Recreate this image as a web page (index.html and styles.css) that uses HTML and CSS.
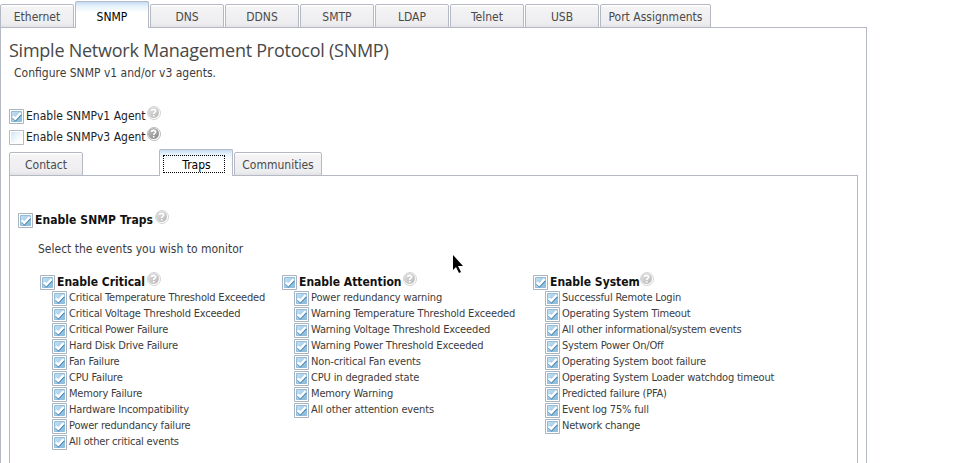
FILE: index.html
```
<!DOCTYPE html>
<html lang="en">
<head>
<meta charset="utf-8">
<title>Simple Network Management Protocol (SNMP)</title>
<link rel="stylesheet" href="styles.css">
</head>
<body>
<svg class="defs" width="0" height="0">
  <defs>
    <linearGradient id="blue" x1="0" y1="0" x2="1" y2="1"><stop offset="0" stop-color="#c6e0f2"/><stop offset=".5" stop-color="#a8d0ea"/><stop offset="1" stop-color="#7fbbe0"/></linearGradient>
    <linearGradient id="pale" x1="0" y1="0" x2="1" y2="1"><stop offset="0" stop-color="#d3e6f5"/><stop offset=".8" stop-color="#fff"/></linearGradient>
    <linearGradient id="ball" x1="0" y1="0" x2="1" y2="1"><stop offset="0" stop-color="#e0e0e0"/><stop offset="1" stop-color="#b9b9b9"/></linearGradient>
    <linearGradient id="balldark" x1="0" y1="0" x2="1" y2="1"><stop offset="0" stop-color="#c4c4c4"/><stop offset="1" stop-color="#858585"/></linearGradient>
    <symbol id="on" viewBox="0 0 15 15"><path fill="#fff" stroke="#aab4bf" d="M.5.5h14v14H.5z"/><path fill="url(#blue)" stroke="#94bcd8" d="M2.5 2.5h10v10h-10z"/><path fill="none" stroke="#4a86b0" stroke-width="2.4" d="M4 8.5l2.5 2.5 5.4-5.6"/><path fill="none" stroke="#fff" stroke-width="2.4" d="M3.7 7.3l2.6 2.5L11.7 4"/></symbol>
    <symbol id="off" viewBox="0 0 15 15"><path fill="#fff" stroke="#b3bbc5" d="M.5.5h14v14H.5z"/><path fill="url(#pale)" d="M2 2h11v11H2z"/></symbol>
    <symbol id="help" viewBox="0 0 14 14"><circle cx="7" cy="7" r="6.5" fill="#fff" stroke="#d4d4d4"/><circle cx="6.5" cy="6.5" r="5.5" fill="url(#ball)"/><path fill="none" stroke="#fff" stroke-width="1.6" d="M4.6 5.1c0-2.3 4.1-2.3 4.1 0 0 1.4-2 1.3-2 3M6.7 9v1.5"/></symbol>
    <symbol id="helpdark" viewBox="0 0 14 14"><circle cx="7" cy="7" r="6.5" fill="#fff" stroke="#bbb"/><circle cx="6.5" cy="6.5" r="5.5" fill="url(#balldark)"/><path fill="none" stroke="#fff" stroke-width="1.6" d="M4.6 5.1c0-2.3 4.1-2.3 4.1 0 0 1.4-2 1.3-2 3M6.7 9v1.5"/></symbol>
  </defs>
</svg>
<nav class="tabs">
  <a class="tab">Ethernet</a><a class="tab active">SNMP</a><a class="tab">DNS</a><a class="tab">DDNS</a><a class="tab">SMTP</a><a class="tab">LDAP</a><a class="tab">Telnet</a><a class="tab">USB</a><a class="tab ports">Port Assignments</a>
</nav>
<main class="panel">
  <h1>Simple Network Management Protocol (SNMP)</h1>
  <p class="intro">Configure SNMP v1 and/or v3 agents.</p>
  <div class="agent"><svg class="check"><use href="#on"/></svg><span>Enable SNMPv1 Agent</span><svg class="help"><use href="#help"/></svg></div>
  <div class="agent"><svg class="check"><use href="#off"/></svg><span>Enable SNMPv3 Agent</span><svg class="help"><use href="#helpdark"/></svg></div>
  <nav class="tabs inner">
    <a class="tab contact">Contact</a><a class="tab active"><span class="focus">Traps</span></a><a class="tab communities">Communities</a>
  </nav>
  <section class="panel traps">
    <div class="title enable"><svg class="check"><use href="#on"/></svg><span>Enable SNMP Traps</span><svg class="help"><use href="#help"/></svg></div>
    <p class="select">Select the events you wish to monitor</p>
    <div class="groups">
      <div class="group critical">
        <div class="title"><svg class="check"><use href="#on"/></svg><span>Enable Critical</span><svg class="help"><use href="#help"/></svg></div>
        <ul>
          <li><svg class="check"><use href="#on"/></svg><span>Critical Temperature Threshold Exceeded</span></li>
          <li><svg class="check"><use href="#on"/></svg><span>Critical Voltage Threshold Exceeded</span></li>
          <li><svg class="check"><use href="#on"/></svg><span>Critical Power Failure</span></li>
          <li><svg class="check"><use href="#on"/></svg><span>Hard Disk Drive Failure</span></li>
          <li><svg class="check"><use href="#on"/></svg><span>Fan Failure</span></li>
          <li><svg class="check"><use href="#on"/></svg><span>CPU Failure</span></li>
          <li><svg class="check"><use href="#on"/></svg><span>Memory Failure</span></li>
          <li><svg class="check"><use href="#on"/></svg><span>Hardware Incompatibility</span></li>
          <li><svg class="check"><use href="#on"/></svg><span>Power redundancy failure</span></li>
          <li><svg class="check"><use href="#on"/></svg><span>All other critical events</span></li>
        </ul>
      </div>
      <div class="group attention">
        <div class="title"><svg class="check"><use href="#on"/></svg><span>Enable Attention</span><svg class="help"><use href="#help"/></svg></div>
        <ul>
          <li><svg class="check"><use href="#on"/></svg><span>Power redundancy warning</span></li>
          <li><svg class="check"><use href="#on"/></svg><span>Warning Temperature Threshold Exceeded</span></li>
          <li><svg class="check"><use href="#on"/></svg><span>Warning Voltage Threshold Exceeded</span></li>
          <li><svg class="check"><use href="#on"/></svg><span>Warning Power Threshold Exceeded</span></li>
          <li><svg class="check"><use href="#on"/></svg><span>Non-critical Fan events</span></li>
          <li><svg class="check"><use href="#on"/></svg><span>CPU in degraded state</span></li>
          <li><svg class="check"><use href="#on"/></svg><span>Memory Warning</span></li>
          <li><svg class="check"><use href="#on"/></svg><span>All other attention events</span></li>
        </ul>
      </div>
      <div class="group system">
        <div class="title"><svg class="check"><use href="#on"/></svg><span>Enable System</span><svg class="help"><use href="#help"/></svg></div>
        <ul>
          <li><svg class="check"><use href="#on"/></svg><span>Successful Remote Login</span></li>
          <li><svg class="check"><use href="#on"/></svg><span>Operating System Timeout</span></li>
          <li><svg class="check"><use href="#on"/></svg><span>All other informational/system events</span></li>
          <li><svg class="check"><use href="#on"/></svg><span>System Power On/Off</span></li>
          <li><svg class="check"><use href="#on"/></svg><span>Operating System boot failure</span></li>
          <li><svg class="check"><use href="#on"/></svg><span>Operating System Loader watchdog timeout</span></li>
          <li><svg class="check"><use href="#on"/></svg><span>Predicted failure (PFA)</span></li>
          <li><svg class="check"><use href="#on"/></svg><span>Event log 75% full</span></li>
          <li><svg class="check"><use href="#on"/></svg><span>Network change</span></li>
        </ul>
      </div>
    </div>
  </section>
</main>
<svg class="pointer" viewBox="0 0 10 18"><path d="M0 0v15l3-3 3 6 2-1-3-6h5z"/></svg>
</body>
</html>
```
FILE: styles.css
```
* { box-sizing: border-box; }
html, body { height: 463px; margin: 0; }
body { background: #fff; color: #3c3c3c; font: 12px/16px "DejaVu Sans Condensed", "DejaVu Sans", sans-serif; font-stretch: condensed; white-space: nowrap; }
.defs { display: block; height: 0; }
svg { flex: none; }
h1, p, ul { margin: 0; padding: 0; }
ul { list-style: none; }

.tabs { display: flex; align-items: flex-end; gap: 1px; height: 28px; position: relative; z-index: 1; }
.tab { width: 74px; height: 24px; border: 1px solid #b5b9c3; border-radius: 2px 2px 0 0; background: linear-gradient(#fff 0 1px, #f4f4f5 2px, #ededf0 85%, #e2e2e7); text-align: center; line-height: 25px; color: #4a4a4a; }
.tab.active { height: 27px; border-bottom: 0; background: linear-gradient(#c5dcf2, #e6f1fb 4px, #fff 11px); color: #000; line-height: 30px; }
.ports { width: 111px; }

.panel { border: 1px solid #b5b9c3; border-bottom: 0; margin-top: -1px; }
main.panel { width: 867px; height: 436px; padding: 11px 8px 0; }
h1 { font: 18px/22px "Open Sans", "Noto Sans", sans-serif; letter-spacing: -0.25px; color: #484848; height: 22px; }
.intro { margin: 4px 0 0 5px; height: 42px; }
.agent, .title { display: flex; color: #222; }
.agent { height: 21px; line-height: 19px; }
.check { width: 15px; height: 15px; }
.agent .check { margin-top: 2px; }
.agent span { margin-left: 2px; width: 121px; }
.help { width: 14px; height: 14px; }
.agent .help { margin-top: -1px; }

.inner { margin-top: -1px; }
.inner .contact { margin-right: 75px; }
.inner .communities { width: 88px; }
.inner .active { line-height: 16px; padding: 5px 0 0 3px; }
.focus { display: block; width: 62px; height: 18px; border: 1px dotted #000; padding-left: 5px; line-height: 18px; }
.traps { width: 849px; height: 288px; padding: 36px 8px 0; }
.title { color: #111; font-weight: bold; }
.title .check { margin-top: 1px; }
.title span { margin-left: 2px; }
.title .help { margin: -2px 0 0 2px; }
.enable span { letter-spacing: 0.07px; }
.select { margin: 13px 0 0 20px; }
.groups { display: flex; margin: 17px 0 0 22px; }
.critical { width: 242px; }
.attention { width: 251px; }
.group ul { margin: 0 0 0 12px; font-size: 11px; letter-spacing: -0.19px; }
.attention ul { letter-spacing: -0.14px; }
.attention .title span { width: 102px; }
.critical .title span { width: 88px; }
.system .title span { width: 88px; }
.group li { display: flex; height: 16px; line-height: 16px; }
.group li .check { margin-top: 1px; }
.group li span { margin-left: 2px; }
.pointer { position: absolute; left: 453px; top: 255px; width: 10px; height: 18px; }
```
